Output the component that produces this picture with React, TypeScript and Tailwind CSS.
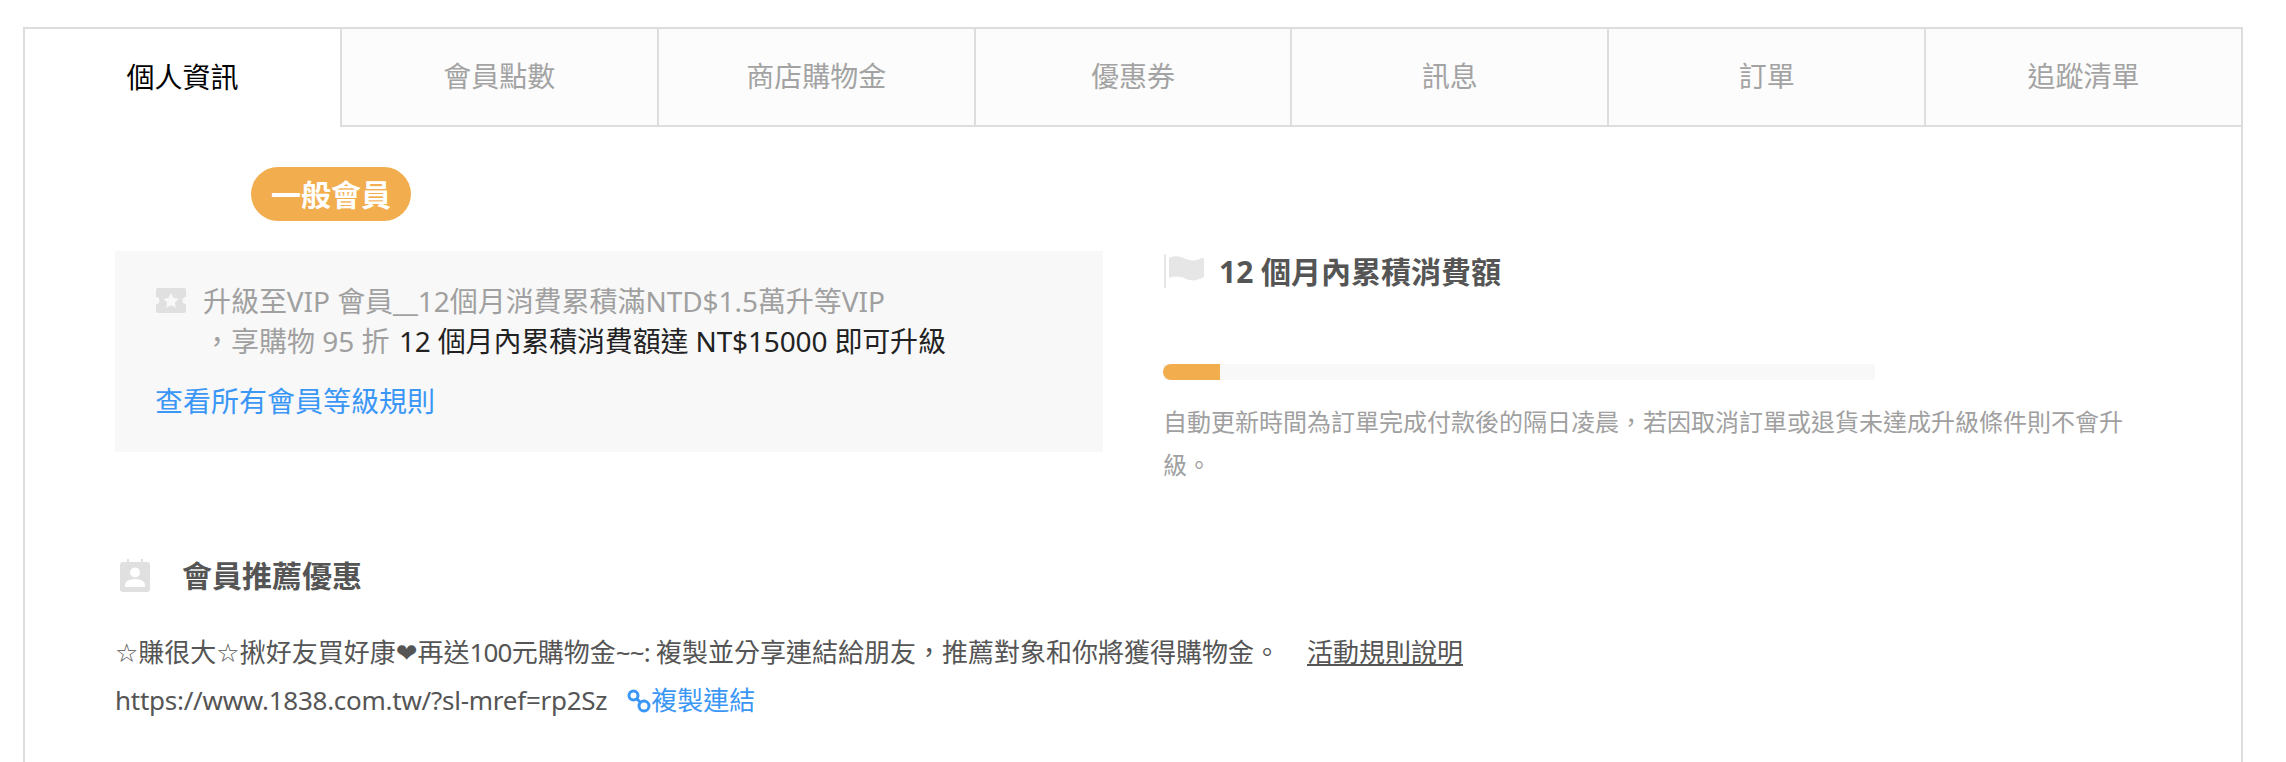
const tabs = ["會員點數", "商店購物金", "優惠券", "訊息", "訂單", "追蹤清單"];

function TicketIcon() {
  return (
    <svg width="30" height="25" viewBox="0 0 30 25" className="shrink-0">
      <path d="M2 0H28a2 2 0 0 1 2 2V9a3.5 3.5 0 0 0 0 7v7a2 2 0 0 1-2 2H2a2 2 0 0 1-2-2V16a3.5 3.5 0 0 0 0-7V2a2 2 0 0 1 2-2Z" fill="#e0e0e0" />
      <path d="M15 5l2.4 5 5.4.7-4 3.7 1 5.4-4.8-2.6-4.8 2.6 1-5.4-4-3.7 5.4-.7Z" fill="#f8f8f8" />
    </svg>
  );
}

function FlagIcon() {
  return (
    <svg width="40" height="34" viewBox="0 0 40 34" className="shrink-0">
      <rect x="0" y="0" width="2" height="34" rx="1" fill="#e6e6e6" />
      <path d="M5 4c6-3 11-2 17 1 5 2 10 2 16-1 1 0 2 0 2 1v17c0 1-1 2-2 2-6 3-11 3-16 1-6-3-11-3-17-1Z" fill="#e6e6e6" />
    </svg>
  );
}

function ContactIcon() {
  return (
    <svg width="30" height="33" viewBox="0 0 30 33" className="shrink-0">
      <path d="M7 0h2v3h12V0h2v3h4a3 3 0 0 1 3 3v24a3 3 0 0 1-3 3H3a3 3 0 0 1-3-3V6a3 3 0 0 1 3-3h4Z" fill="#e0e0e0" />
      <circle cx="15" cy="13.5" r="5" fill="#fff" />
      <path d="M5 28v-2c0-4 5-6 10-6s10 2 10 6v2Z" fill="#fff" />
    </svg>
  );
}

function ChainIcon() {
  return (
    <svg width="24" height="24" viewBox="0 0 24 24" fill="none" stroke="#3b97f5" strokeWidth="3" className="shrink-0">
      <circle cx="6.5" cy="6.5" r="4.5" />
      <circle cx="17" cy="17" r="5" />
      <path d="M9 9l5 5" />
    </svg>
  );
}

export default function App() {
  return (
    <div className="h-[762px] overflow-hidden bg-white pt-[27px] pl-[23px] pr-[43px] font-['Noto_Sans','Noto_Sans_CJK_TC',sans-serif] text-[#555]">
      <div className="h-full border-x-2 border-t-2 border-[#ddd]">
        <div className="flex h-[98px]">
          <div className="flex flex-1 items-center justify-center pb-[2px] text-[28px] text-black">個人資訊</div>
          {tabs.map((t) => (
            <div key={t} className="flex flex-1 items-center justify-center border-b-2 border-l-2 border-[#ddd] bg-[#fcfcfc] pb-[2px] text-[28px] text-[#a3a3a3]">
              {t}
            </div>
          ))}
        </div>

        <div className="pl-[90px]">
          <div className="ml-[136px] mt-[40px] flex h-[54px] w-[160px] items-center justify-center rounded-[27px] bg-[#f2ad4e] text-[30px] font-bold text-white">
            一般會員
          </div>

          <div className="mt-[30px] flex">
            <div className="h-[201px] w-[988px] shrink-0 bg-[#f8f8f8] px-[41px] pt-[30px]">
              <div className="flex gap-[17px] text-[28px] leading-[40px] text-[#a0a0a0]">
                <div className="pt-[7px]"><TicketIcon /></div>
                <div>
                  <span className="tracking-[-0.05px]">升級至VIP 會員__12個月消費累積滿NTD$1.5萬升等VIP</span>
                  <br />
                  ，享購物 95 折 <span className="ml-[2px] tracking-[-0.15px] text-[#222]">12 個月內累積消費額達 NT$15000 即可升級</span>
                </div>
              </div>
              <div className="-ml-[1px] mt-[20px] text-[28px] leading-[40px] text-[#3b97f5]">查看所有會員等級規則</div>
            </div>

            <div className="ml-[60px] w-[1000px]">
              <div className="flex h-[40px] items-center gap-[15px] pl-[1px] text-[30px] font-bold">
                <FlagIcon />
                <span>12 個月內累積消費額</span>
              </div>
              <div className="mt-[73px] h-[16px] w-[712px] bg-[#f8f8f8]">
                <div className="h-full w-[57px] rounded-l-full bg-[#f2ad4e]" />
              </div>
              <div className="mt-[20px] w-[970px] text-[24px] leading-[43px] text-[#a0a0a0]">
                自動更新時間為訂單完成付款後的隔日凌晨，若因取消訂單或退貨未達成升級條件則不會升級。
              </div>
            </div>
          </div>

          <div className="ml-[5px] mt-[73px] flex h-[33px] items-center gap-[32px] text-[30px] font-bold">
            <ContactIcon />
            <span>會員推薦優惠</span>
          </div>

          <div className="mt-[37px] text-[26px] leading-[47px]">
            <div className="flex">
              <span>
                <span className="font-['DejaVu_Sans']">☆</span>賺很大<span className="font-['DejaVu_Sans']">☆</span>揪好友買好康<span className="font-['DejaVu_Sans']">❤</span>再送<span className="tracking-[-0.8px]">100</span>元購物金<span className="tracking-[-0.8px]">~~: </span>複製並分享連結給朋友，推薦對象和你將獲得購物金。
              </span>
              <span className="ml-[27px] underline">活動規則說明</span>
            </div>
            <div className="flex items-center">
              <span className="tracking-[-0.26px]">https://www.1838.com.tw/?sl-mref=rp2Sz</span>
              <span className="ml-[20px] flex items-center text-[#3b97f5]">
                <ChainIcon />
                複製連結
              </span>
            </div>
          </div>
        </div>
      </div>
    </div>
  );
}
